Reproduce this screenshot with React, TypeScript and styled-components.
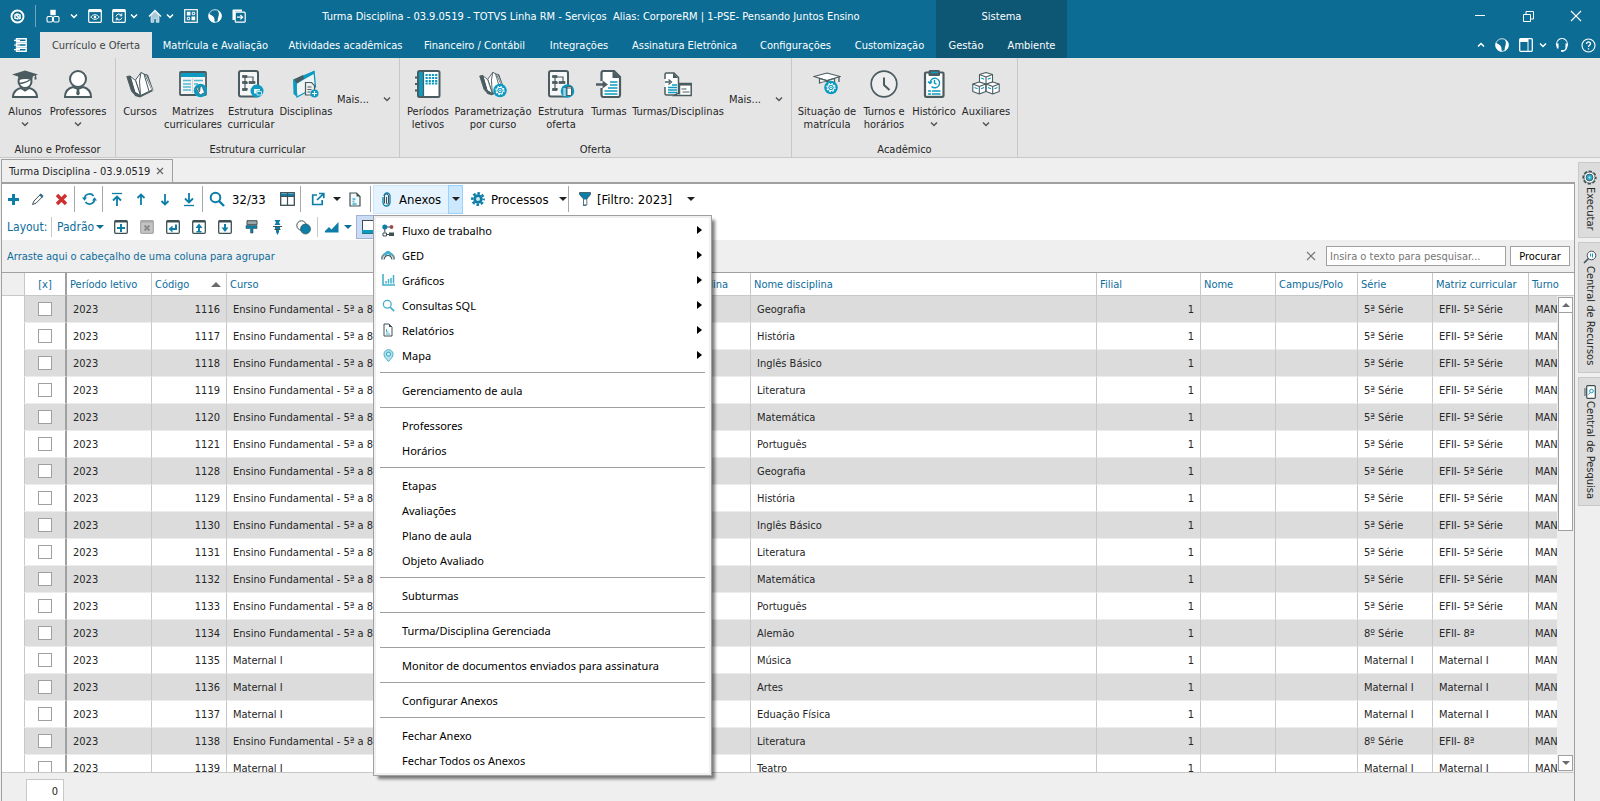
import React from 'react';
import styled, { createGlobalStyle, css } from 'styled-components';

/* ---------- tokens ---------- */
const UI = '"DejaVu Sans Condensed", "Liberation Sans", sans-serif';
const MENU = '"Noto Sans", "Open Sans", sans-serif';
const c = {
  brand: '#0c6c94', brandDark: '#0d5674', ribbon: '#e5e5e5', shell: '#efefef',
  line: '#c8c8c8', frame: '#a0a0a0', link: '#0c6c9c', slate: '#4a5c60', teal: '#0c9ac0', text: '#262626',
};

const Global = createGlobalStyle`
  * { box-sizing: border-box; }
  body { margin: 0; background: ${c.shell}; font: 11px/13px ${UI}; color: ${c.text}; overflow: hidden; }
  button { font: inherit; color: inherit; background: none; border: 0; padding: 0; margin: 0; }
  svg { display: block; flex: none; }
  ul { list-style: none; margin: 0; padding: 0; }
`;

/* ---------- layout parts ---------- */
const Shell = styled.div`display: flex; flex-direction: column; height: 100vh; min-width: 1200px;`;
const Head = styled.header`background: ${c.brand}; color: #fff;`;
const TitleRow = styled.div`display: flex; height: 32px;`;
const TitleMain = styled.div`display: flex; align-items: center; width: 936px; padding-left: 10px;`;
const QuickBar = styled.div`display: flex; align-items: center; gap: 10px;`;
const QuickButton = styled.button`display: flex; align-items: center; gap: 4px; height: 24px;`;
const QatLine = styled.span`width: 1px; height: 22px; background: #6ea6bf;`;
const Caption = styled.h1`flex: 1; margin: 0; font: 11px/13px ${UI}; text-align: center; white-space: pre;`;
const Context = styled.div`display: flex; align-items: center; justify-content: center; width: 131px; background: ${c.brandDark};`;
const Spacer = styled.div`flex: 1;`;
const IconButton = styled.button<{ $w?: number }>`
  display: flex; align-items: center; justify-content: center; width: ${p => p.$w ?? 24}px; height: 24px; flex: none;
`;
const WindowButton = styled(IconButton)`width: 48px; height: 32px;`;

const TabRow = styled.nav`display: flex; height: 26px;`;
const MainMenu = styled.button`display: flex; align-items: center; justify-content: center; width: 40px;`;
const RibbonTab = styled.button<{ $w: number; $on?: boolean; $ctx?: boolean }>`
  width: ${p => p.$w}px; flex: none; white-space: nowrap; text-align: center;
  ${p => p.$on && css`background: ${c.ribbon}; color: #3c4446;`}
  ${p => p.$ctx && css`background: ${c.brandDark};`}
`;
const TabTools = styled.div`display: flex; align-items: center; padding-right: 1px;`;

const Ribbon = styled.section`display: flex; height: 100px; background: ${c.ribbon}; border-bottom: 1px solid ${c.line};`;
const RibbonGroup = styled.div<{ $w: number }>`
  display: flex; flex-direction: column; width: ${p => p.$w}px; flex: none; border-right: 1px solid ${c.line};
`;
const RibbonItems = styled.div`display: flex; flex: 1; padding: 11px 0 0 3px;`;
const RibbonCaption = styled.div`height: 14px; text-align: center;`;
const RibbonItem = styled.button<{ $w: number }>`
  display: flex; flex-direction: column; align-items: center; width: ${p => p.$w}px; flex: none;
`;
const ItemIcon = styled.span`display: block; height: 36px; padding-top: 1px;`;
const ItemLabel = styled.span`white-space: pre; text-align: center; line-height: 13px; margin-bottom: 3px;`;
const MoreButton = styled.button`display: flex; align-items: center; gap: 14px; height: 60px; padding-left: 2px; white-space: nowrap;`;

const Body = styled.main`display: flex; flex: 1; min-height: 0;`;
const Workspace = styled.div`display: flex; flex-direction: column; flex: 1; min-width: 0; padding-left: 1px;`;
const DocTabs = styled.div`display: flex; height: 24px; padding-top: 1px; flex: none;`;
const DocTab = styled.div`
  display: flex; align-items: center; justify-content: space-between; width: 172px; padding: 0 8px 0 7px; white-space: nowrap;
  border: 1px solid ${c.frame}; border-bottom: 0;
`;
const Panel = styled.section`
  display: flex; flex-direction: column; flex: 1; min-height: 0;
  border: solid ${c.frame}; border-width: 2px 1px 0 1px; background: ${c.shell};
`;
const Bar = styled.div<{ $h: number }>`display: flex; align-items: center; height: ${p => p.$h}px; flex: none; background: #fff; font-size: 13px; color: #000;`;
const LayoutBar = styled(Bar)`font-size: 12px; color: ${c.link}; padding-left: 5px;`;
const LayoutLabel = styled.span`width: 43px;`;
const Sep = styled.span<{ $light?: boolean }>`
  width: 1px; height: ${p => (p.$light ? 20 : 26)}px; margin: 0 2px 0 1px; background: ${p => (p.$light ? c.line : '#a8a8a8')};
`;
const Counter = styled.span`width: 46px; padding-left: 3px; white-space: nowrap;`;
const SplitWrap = styled.div`position: relative; display: flex;`;
const SplitMain = styled.button`
  display: flex; align-items: center; gap: 8px; width: 75px; height: 29px; padding-left: 8px; background: #e5f3ff; border: 1px solid #cce8ff; border-right: 0;
`;
const SplitArrow = styled.button`display: flex; align-items: center; justify-content: center; width: 15px; height: 29px; background: #cce8ff; border: 1px solid #99d1ff;`;
const ToolButton = styled.button<{ $w: number }>`
  display: flex; align-items: center; gap: 6px; width: ${p => p.$w}px; height: 28px; padding-left: 8px; white-space: nowrap;
`;
const Caret = styled.span<{ $color?: string }>`
  border: 4px solid transparent; border-top-color: ${p => p.$color ?? '#202020'}; border-bottom: 0;
`;
const EndCaret = styled(Caret)`margin-left: auto;`;
const Padrao = styled.button`display: flex; align-items: center; gap: 2px; width: 54px; padding-left: 3px;`;
const Pressed = styled.button`
  display: flex; align-items: center; width: 30px; height: 24px; padding-left: 5px; background: #cddcf5; border: 1px solid #9fb4d8; margin-left: 4px;
`;

const Menu = styled.ul`
  position: absolute; z-index: 5; top: 30px; left: 0; width: 339px; padding: 2px; background: #fff;
  border: 1px solid ${c.frame}; box-shadow: inset 0 0 0 2px #f0f0f0, 4px 4px 3px -1px rgba(0, 0, 0, .5);
`;
const MenuLine = styled.li`height: 1px; margin: 4px 4px 5px 4px; background: ${c.frame};`;
const MenuButton = styled.button`
  display: flex; align-items: center; width: 100%; height: 25px; padding: 0 7px 0 3px; font: 11px/15px ${MENU}; color: #000; white-space: nowrap;
`;
const MenuIcon = styled.span`display: flex; justify-content: center; width: 18px; margin-right: 5px;`;
const SubArrow = styled.span`margin-left: auto; border: 4px solid transparent; border-left: 5px solid #000; border-right: 0;`;

const GroupBar = styled.div`display: flex; align-items: center; height: 32px; flex: none; padding: 0 4px 0 5px; color: ${c.link};`;
const Search = styled.input`
  width: 180px; height: 20px; margin: 0 4px 0 3px; padding: 0 3px; border: 1px solid ${c.frame}; border-radius: 0; background: #fff;
  font: 11px/13px ${UI}; color: ${c.text};
  &::placeholder { color: #757575; opacity: 1; }
`;
const FindButton = styled.button`width: 60px; height: 20px; border: 1px solid ${c.frame}; background: #fff; color: #000;`;

const GridArea = styled.div`position: relative; flex: 1; min-height: 0; overflow: hidden; background: #fff; border-top: 1px solid ${c.frame};`;
const Table = styled.table`width: 100%; table-layout: fixed; border-collapse: separate; border-spacing: 0;`;
const Th = styled.th<{ $thick?: boolean; $mark?: boolean }>`
  height: 23px; padding: 0 3px; font-weight: 400; text-align: ${p => (p.$thick ? 'center' : 'left')}; color: ${c.link}; white-space: nowrap; overflow: hidden;
  background: ${p => (p.$mark ? c.shell : '#fff')}; border-bottom: 1px solid ${c.line};
  border-right: ${p => (p.$thick ? 2 : 1)}px solid ${p => (p.$thick ? c.frame : c.line)};
  &:last-child { border-right: 0; }
`;
const HeadFlex = styled.span`display: flex; align-items: center; justify-content: space-between; padding-right: 2px;`;
const SortUp = styled.span`border: 5px solid transparent; border-bottom-color: #6b6b6b; border-top: 0;`;
const Td = styled.td<{ $num?: boolean; $thick?: boolean }>`
  height: 27px; padding: 0 6px; text-align: ${p => (p.$num ? 'right' : p.$thick ? 'center' : 'left')}; white-space: nowrap; overflow: hidden;
  border-bottom: 1px solid #ececec; border-right: ${p => (p.$thick ? 2 : 1)}px solid ${p => (p.$thick ? c.frame : c.line)};
  &:last-child { border-right: 0; }
`;
const MarkTd = styled(Td)`background: #fff; border-bottom-color: #fff;`;
const Tr = styled.tr<{ $odd: boolean }>`background: ${p => (p.$odd ? '#dcdcdc' : '#fff')};`;
const Tick = styled.input`
  appearance: none; display: block; width: 14px; height: 14px; margin: 0 auto; border: 1px solid ${c.frame}; border-radius: 0; background: #fff;
`;
const Scroll = styled.div`
  position: absolute; top: 23px; right: 0; bottom: 0; width: 17px; display: flex; flex-direction: column; background: ${c.shell}; padding: 1px;
`;
const ScrollEnd = styled.button`display: flex; align-items: center; justify-content: center; height: 16px; flex: none; border: 1px solid ${c.frame}; background: #fff;`;
const Thumb = styled.div`height: 46%; border: 1px solid ${c.frame}; border-top: 0; background: #fff; margin-bottom: auto;`;
const Foot = styled.footer`height: 29px; flex: none; border-top: 1px solid ${c.line}; padding: 6px 0 0 24px;`;
const Total = styled.output`display: block; width: 38px; height: 22px; padding: 5px 5px 0; text-align: right; background: #fff; border: 1px solid ${c.line}; border-bottom: 0;`;

const Dock = styled.aside`display: flex; flex-direction: column; gap: 4px; width: 25px; flex: none; padding: 4px 0 0 3px;`;
const DockTab = styled.button<{ $h: number }>`
  display: flex; flex-direction: column; align-items: center; gap: 2px; height: ${p => p.$h}px; padding-top: 7px;
  background: #dcdcdc; border: 1px solid ${c.line}; border-right: 0;
`;
const DockText = styled.span`writing-mode: vertical-rl; white-space: nowrap; line-height: 14px;`;

/* ---------- drawings ---------- */
const Svg = ({ s = 16, w, children, ...r }: any) => (
  <svg width={w ?? s} height={s} viewBox={`0 0 ${w ?? s} ${s}`} fill="none" aria-hidden="true" {...r}>{children}</svg>
);
const Chevron = ({ color = '#fff', up }: { color?: string; up?: boolean }) => (
  <Svg w={8} s={6}><path d={up ? 'M1 4.500l3-3 3 3' : 'M1 1.500l3 3 3-3'} stroke={color} strokeWidth="1.500" /></Svg>
);
const Cross = ({ color, s = 9 }: { color: string; s?: number }) => (
  <Svg s={s}><path d={`M1 1L${s - 1} ${s - 1}M${s - 1} 1L1 ${s - 1}`} stroke={color} strokeWidth="1.200" /></Svg>
);
const W = '#fff';
const Globe = () => (
  <Svg s={14}><circle cx="7" cy="7" r="6.300" stroke="#cfe2ea" strokeWidth="1" />
    <path d="M.8 4.500C2.500 6 5 6.500 6 8.500S6 12 7 13.600C3 13.700.6 10.500.5 7zM9.500 1.200c2.500 1 4.100 3 4.100 5.800 0 2.700-1.600 5.200-4.300 6.300.6-2 .2-3 1-5.400s1-4-.8-6.700z" fill={W} /></Svg>
);
const Logo = () => <Svg s={15}><circle cx="7.500" cy="7.500" r="6" stroke={W} strokeWidth="1.900" /><path d="M5 5.200v4L8.500 10M6.300 4.800L10 6v4" stroke={W} strokeWidth="1.500" /><path d="M5.500 5l4.500 5" stroke={W} strokeWidth="1.500" /></Svg>;
const Cubes = () => <Svg s={14}><path d="M4.300.8h5.400v5.400H4.300z" fill={W} /><rect x="1" y="7.500" width="5.500" height="5.500" rx="1.200" stroke={W} strokeWidth="1.100" /><rect x="7.500" y="7.500" width="5.500" height="5.500" rx="1.200" stroke={W} strokeWidth="1.100" /></Svg>;
const WinBox = ({ children }: any) => <Svg s={14}><rect x=".7" y=".7" width="12.600" height="12.600" rx="1" stroke={W} strokeWidth="1.200" /><path d="M1 2h12" stroke={W} strokeWidth="2.200" />{children}</Svg>;
const Eye = () => <WinBox><path d="M2.800 8c2-3 6.400-3 8.400 0-2 3-6.400 3-8.400 0z" stroke={W} /><circle cx="7" cy="8" r="1.300" fill={W} /></WinBox>;
const Cycle = () => <WinBox><path d="M4 7.500a3 3 0 0 1 5.500-1M10 8.500a3 3 0 0 1-5.500 1M9.800 4.500v2.300H7.700M4.300 11.500V9.200h2" stroke={W} /></WinBox>;
const Home = () => <Svg s={14}><path d="M1 7.500L7 1.500l6 6" stroke={W} strokeWidth="1.300" /><path d="M3 7v6.300h2.800V9.500h2.400v3.800H11V7L7 3z" fill="#a8cad8" stroke={W} strokeWidth=".6" /></Svg>;
const Cells = () => <Svg s={14}><rect x=".7" y=".7" width="12.600" height="12.600" stroke={W} strokeWidth="1.200" /><path d="M2.800 2.800h3.700v3.700H2.800zM7.500 7.500h3.700v3.700H7.500z" fill={W} /><path d="M8.300 3.300h2.400v2.400H8.300zM3.300 8.300h2.400v2.400H3.300z" stroke={W} /></Svg>;
const Exit = () => <Svg s={14}><path d="M.5 1.500q0-1 1-1H10v2H3V11H.5z" fill={W} /><rect x="3.200" y="3.200" width="10" height="10" rx="1" stroke={W} strokeWidth="1.200" /><path d="M5 8.200h5.500M8.400 6l2.200 2.200-2.200 2.200" stroke={W} strokeWidth="1.200" /></Svg>;
const Books = () => <Svg w={13} s={14}><path d="M2.500.8h9.700v3H2.500zM2.500 5.500h9.700v3H2.500zM2.500 10.200h9.700v3H2.500z" stroke={W} strokeWidth="1.400" /><path d="M0 2.300h6M0 7h6M0 11.700h6" stroke={W} strokeWidth="1.200" /></Svg>;
const PanelIcon = () => <Svg s={14}><rect x=".7" y=".7" width="12.600" height="12.600" rx="1" stroke={W} strokeWidth="1.300" /><path d="M1 1h8v3H1z" fill={W} /><path d="M9 1v12" stroke={W} /></Svg>;
const Headset = () => <Svg s={14}><path d="M3 9a5.200 5.200 0 1 1 8 0M7 13c3 0 4-1.500 4.500-3" stroke={W} strokeWidth="1.100" /><path d="M.8 5.500h2.700v5H2zM10.500 5.500h2.700l-1.200 5h-1.500zM6 12h2.500v1.800H6z" fill={W} /></Svg>;
const Help = () => <Svg s={15}><circle cx="7.500" cy="7.500" r="6.500" stroke={W} strokeWidth="1.100" /><path d="M5.500 6c0-3 4-2.700 4-.3 0 1.500-2 1.500-2 3.200M7.500 10.300v1.200" stroke={W} strokeWidth="1.300" /></Svg>;

/* ribbon drawings, all on a 28px field */
const S = c.slate, B = c.teal;
const R = ({ children }: any) => <Svg s={28} stroke={S} strokeWidth="1.600">{children}</Svg>;
const Cog = ({ x, y }: { x: number; y: number }) => (
  <g stroke="none"><circle cx={x} cy={y} r="6.800" fill={B} /><circle cx={x} cy={y} r="4" stroke="#fff" strokeWidth="1.300" strokeDasharray="1.600 1.540" fill="none" /><circle cx={x} cy={y} r="3.200" stroke="#fff" strokeWidth="1" fill="none" /><circle cx={x} cy={y} r="1.200" stroke="#fff" strokeWidth=".9" fill="none" /></g>
);
const BookShape = () => (
  <g fill="#fff" strokeWidth="1" strokeLinejoin="round">
    <path d="M19 4.500l2.500.5L27 20.500 14 27 9 25.500z" fill={S} />
    <path d="M9.500 10L15 2.500l4 2L26 20l-11.500 5.500z" />
    <path d="M15 2.500L13.500 11 14.500 25M18 4.200l5 17" fill="none" />
    <path d="M4 6l5.500 4.500 5 15L8.500 22z" />
    <path d="M.8 6.500L4 6l5 16.500 5 3.500-5.500-1.500L5.500 21z" fill={S} />
    <path d="M20 5l6.500 15.500" stroke="#fff" fill="none" strokeWidth=".7" />
  </g>
);
const TreeDoc = ({ children }: any) => <R><rect x="2" y="1" width="19" height="25.500" rx="2" fill="#f7f7f7" strokeWidth="2" /><path d="M8 6v13h3M8 13h3M8 7h8v5" strokeWidth="1.200" /><path d="M5.500 5.500H10v2H5.500zM12 11.500h6v2h-6zM5.500 11.500H10v2H5.500zM5.500 18.500H10v2H5.500z" fill={S} strokeWidth=".8" />{children}</R>;
const art: Record<string, React.ReactNode> = {
  aluno: <R><path d="M2 27c0-6 5-8.500 8-9l4 2.500 4-2.500c3 .5 8 3 8 9z" fill="#fff" strokeWidth="2" /><circle cx="14" cy="11.500" r="6.500" fill="#fff" strokeWidth="2" /><path d="M1 4.500L14 .5l13 4-5 1.800L21 10c-4-1.500-9-1.500-13 0L7 6.500z" fill={S} stroke="none" /><path d="M8 13.500c5-.5 8-1 11-4M24.500 5v3" strokeWidth="1.300" /><path d="M23.500 7.500h2v2h-2z" fill={S} stroke="none" /></R>,
  professor: <R><path d="M1 27c0-6 4-9 8-10l5 2 5-2c4 1 8 4 8 10z" fill="#fff" strokeWidth="2" /><circle cx="14" cy="9" r="8" fill="#fff" strokeWidth="2" /><path d="M13 18.500h2l.8 5.500L14 25.500 12.200 24z" fill={S} stroke="none" /></R>,
  cursos: <R><BookShape /></R>,
  matrizes: <R><rect x="1" y="2" width="26" height="23" rx="1" fill="#f4f4f4" strokeWidth="1.800" /><path d="M2 3h24v4H2z" fill={B} stroke="none" /><path d="M4 10.500h8M4 14h8M4 17h8M4 20h8M15 10.500h9M15 14h4" stroke="#55b7d2" strokeWidth="1.300" /><path d="M13.500 8v15" stroke="#ccc" strokeWidth=".8" /><circle cx="21.500" cy="20.500" r="6.800" fill={B} stroke="none" /><path d="M17 17.500l2 .5 1.500 4 1-6 1.500.5 2.500 6L21 25z" fill="#fff" strokeWidth=".7" /></R>,
  estrutura: <TreeDoc><circle cx="20" cy="21" r="6.500" fill={B} stroke="none" /><path d="M16.500 18h7v6h-7z" fill="#e9f6fa" stroke="none" /><path d="M16.500 18.500h7v2.500H20v3h-3.500z" stroke={B} fill="none" strokeWidth="1" /><path d="M20 21.500h4.500v3.500H20z" fill={B} stroke="#e9f6fa" strokeWidth=".8" /></TreeDoc>,
  disciplinas: <R><path d="M3 11L22 1.500 23.500 17 5 27z" fill="#f0f4f5" stroke={B} strokeWidth="1.300" /><path d="M1 9.500L22.500.8V3.500L5 13.500 4.500 26.500 1.500 24z" fill={B} stroke="none" /><path d="M2 9.500l9-4.500 1 3.500-7 5z" fill={S} stroke="none" /><path d="M13.500 12.500h6l3 3V25h-9z" fill="#eee" strokeWidth="1.200" /><path d="M15.500 17h4M15.500 19.500h4M15.500 22h3" strokeWidth="1" /><circle cx="22.500" cy="23.500" r="4" fill={B} stroke="none" /><path d="M22.500 21v5M20 23.500h5" stroke="#fff" strokeWidth="1.100" /></R>,
  periodos: <R><rect x="4" y="1" width="21.500" height="26" rx="1.500" fill="#fff" strokeWidth="2" /><path d="M5 2h4v24H5z" fill={B} stroke="none" /><path d="M9.500 1v26" strokeWidth="1.200" /><path d="M1 7.500h4M1 14h4M1 20.500h4" strokeWidth="2" /><path d="M11.500 5h12M11.500 8h12M11.500 11h12M11.500 13.500h12" stroke={B} strokeWidth="1.800" strokeDasharray="2.200 1" /></R>,
  parametrizacao: <R><g transform="scale(.92)"><BookShape /></g><Cog x={21} y={20.5} /></R>,
  oferta: <TreeDoc><circle cx="20.500" cy="21" r="6.800" fill={B} stroke="none" /><path d="M16.500 18h8M20 16.500h4.500v9H20z" fill="#fff" stroke={S} strokeWidth="1" /><path d="M17.500 18v8" stroke="#9fd7e6" strokeWidth="2.500" /></TreeDoc>,
  turmas: <R><path d="M6.500 11V3q0-2 2-2H19l6 6v18q0 2-2 2H8.500q-2 0-2-2v-7" fill="#fff" strokeWidth="2.200" /><path d="M17.500 1v7H25z" fill={S} stroke="none" /><path d="M1 14.500h8" strokeWidth="2.400" /><path d="M7.500 10.500l5.500 4-5.500 4z" fill={S} stroke="none" /><path d="M15 12h7.500M15 15h7.500M13 18h9.500M9.500 21h13M9.500 24h13" stroke={B} strokeWidth="1.500" /></R>,
  turmasDisc: <R><path d="M1 9V4.500Q1 3 2.500 3H10l4.500 4.500v16q0 1.500-1.500 1.500H2.500Q1 25 1 23.500V17" fill="#fff" strokeWidth="1.500" /><path d="M9 3v5h5z" fill={S} stroke="none" /><path d="M1 12h5M4.500 9.500L7.500 12l-3 2.500" strokeWidth="1.300" /><path d="M8 15h5M4 17.500h9M4 20h9M4 22.500h9" stroke={B} strokeWidth="1.300" /><path d="M15.500 13.500h11.700v12H10.500l3-2h2z" fill="#fff" strokeWidth="1.500" /><path d="M15 14.300h12.500" strokeWidth="2.500" /><path d="M17.500 19h5M18.500 22h7" strokeWidth="1.200" /></R>,
  situacao: <R><path d="M1 6.500L14 3l13 3.500-13 4z" fill="#fff" strokeWidth="1.200" /><path d="M6.500 8.500V13c5-2 10-2 15 0V8.500l-7.500 2.300z" fill="#fff" strokeWidth="1.200" /><path d="M26 7v5" strokeWidth="1.300" /><Cog x={18} y={17.5} /></R>,
  turnos: <R><circle cx="14" cy="14" r="12.800" fill="#eee" strokeWidth="1.700" /><path d="M14 7.500V15l5.500 5" strokeWidth="2" /></R>,
  historico: <R><rect x="5" y="2.500" width="18.500" height="24.300" rx="1" fill="#fff" strokeWidth="2.200" /><path d="M8.500 1.500Q8.500 0 10 0h8.500Q20 0 20 1.500V5q0 1-1 1H9.500q-1 0-1-1z" fill={S} stroke="none" /><path d="M11 2.500h7" stroke={B} strokeWidth="1.500" /><path d="M10 13a4.800 4.800 0 1 1 1.500 3.500M8 11.500l2 2 2-2M14.500 10v3l2 1.200" stroke={B} strokeWidth="1.400" /><path d="M8 21h12.500M8 24h12.500" stroke={B} strokeWidth="1.300" strokeDasharray="3 1 20" /></R>,
  auxiliares: <R>{[[14, 2.5], [7.3, 12], [20.7, 12]].map(([x, y]) => <g key={x} transform={`translate(${x} ${y})`} fill="#fff" strokeWidth="1.100" strokeLinejoin="round"><path d="M0 0l6.500 2v7.500L0 12l-6.500-2.500V2z" /><path d="M-6.500 2L0 4.500 6.500 2M0 4.500V12" fill="none" /><path d="M-4.800 5.500l3 1.200M4.800 5.500l-3 1.200" stroke={B} /></g>)}</R>,
};

/* toolbar drawings */
const D = '#0c7ea8', K = '#3e5055';
const Arrow = ({ down, bar }: { down?: boolean; bar?: boolean }) => (
  <Svg w={12} s={15}><g transform={down ? 'rotate(180 6 7.500)' : undefined}><path d={bar ? 'M6 14V5M2 8.500L6 4.500l4 4' : 'M6 13V3M2.500 6L6 2.500 9.500 6'} stroke={D} strokeWidth="1.800" />{bar && <path d="M1 1.500h10" stroke={D} strokeWidth="1.300" />}</g></Svg>
);
const Lens = ({ s = 16, color = D, sw = 2 }: any) => <svg width={s} height={s} viewBox="0 0 16 16" fill="none" aria-hidden="true"><circle cx="6.500" cy="6.500" r="4.800" stroke={color} strokeWidth={sw} /><path d="M10 10l5 5" stroke={color} strokeWidth={sw + 0.4} /></svg>;
const Gear = () => (
  <Svg s={14}><circle cx="7" cy="7" r="4.700" fill={D} /><circle cx="7" cy="7" r="5.700" stroke={D} strokeWidth="2.400" strokeDasharray="2.600 1.877" strokeDashoffset="1.300" /><circle cx="7" cy="7" r="2" fill="#cfe9f2" /></Svg>
);
const GearOutline = () => (
  <Svg s={15}><circle cx="7.500" cy="7.500" r="5.800" fill="#fff" stroke={K} strokeWidth="2.600" strokeDasharray="3 1.555" strokeDashoffset="1.500" /><circle cx="7.500" cy="7.500" r="5.500" fill="#fff" stroke={K} strokeWidth=".8" /><circle cx="7.500" cy="7.500" r="3.400" fill="#23b0d4" stroke={K} strokeWidth=".9" /><circle cx="7.500" cy="7.500" r=".9" fill="#d6f2f8" /></Svg>
);
const Page = () => <Svg w={12} s={15}><path d="M1 1h6.500L11 4.500V14H1z" fill="#f5f8f8" stroke={K} strokeWidth="1.200" /><path d="M7.500 1v3.500H11z" fill={K} /><path d="M3.500 7h3M3.500 9.500h2M3.500 12h4" stroke="#6bc0d6" strokeWidth="2" /></Svg>;
const Plus = () => <Svg s={13}><path d="M6.500 1v11M1 6.500h11" stroke={D} strokeWidth="3" /></Svg>;
const Pencil = () => <Svg s={13}><path d="M1.500 11.500L3 8l6-6.200L11.200 4 5 10.200z" stroke={K} fill="#fff" /><path d="M8.500 2L10 .8 12.200 3 11 4.500z" fill={D} stroke={K} strokeWidth=".6" /></Svg>;
const Delete = () => <Svg s={13}><path d="M2 2l9 9M11 2l-9 9" stroke="#cf2f2f" strokeWidth="3.400" /></Svg>;
const Refresh = () => <Svg w={15} s={14}><path d="M2.500 7a5 5 0 0 1 9-3M12.500 7a5 5 0 0 1-9 3" stroke={D} strokeWidth="1.700" /><path d="M0 5.500h5L2.500 8.800zM15 8.500h-5l2.500-3.300z" fill={D} /></Svg>;
const Columns = () => <Svg w={15} s={14}><rect x=".7" y=".7" width="13.600" height="12.600" fill="#fff" stroke={K} strokeWidth="1.300" /><path d="M1 1.500h13v2.500H1z" fill={D} /><path d="M7.500 1v12M1 4.500h13" stroke={K} strokeWidth="1.200" /></Svg>;
const Share = () => <Svg s={14}><path d="M6 3H1.700v9.500h9.500V8M8 1.500h4.800v4.800M12.500 1.800L6 8" stroke={D} strokeWidth="1.700" /></Svg>;
const Clip = () => <Svg w={9} s={15}><path d="M2.500 11.500V4a2 2 0 0 1 4 0v7a1 1 0 0 1-2 0V5" stroke={K} strokeWidth="1" /><path d="M1 5v5.500a3.500 3.500 0 0 0 7 0V4a3 3 0 0 0-6 0" stroke={D} strokeWidth="1.300" /></Svg>;
const Funnel = () => <Svg w={12} s={14}><path d="M.5.500h11v2L7.800 7v6l-3.200 1V7L.5 2.500z" fill={D} stroke={K} strokeWidth=".8" /><path d="M5 7.500h2.400v5H5z" fill="#fff" /></Svg>;
const FrameIcon = ({ children, muted }: any) => <Svg s={14}><rect x=".7" y=".7" width="12.600" height="12.600" rx="1" fill={muted ? '#c4c4c4' : '#fff'} stroke={muted ? '#a8a8a8' : K} strokeWidth="1.300" /><path d="M1 1.500h12" stroke={muted ? '#a8a8a8' : K} strokeWidth="2" /><g stroke={muted ? '#8a8a8a' : D} strokeWidth="2">{children}</g></Svg>;
const layoutIcons: [string, React.ReactNode][] = [
  ['Adicionar', <FrameIcon><path d="M7 4v8M3 8h8" /></FrameIcon>],
  ['Excluir', <FrameIcon muted><path d="M4.500 5.500l5 5M9.500 5.500l-5 5" /></FrameIcon>],
  ['Restaurar', <FrameIcon><path d="M10 4.500V9H5" /><path d="M2.500 9L6.500 5.500v7z" fill={D} stroke="none" /></FrameIcon>],
  ['Exportar', <FrameIcon><path d="M7 12V7" /><path d="M7 3.500L3.500 8h7zM4.500 11h5v1.500h-5z" fill={D} stroke="none" /></FrameIcon>],
  ['Importar', <FrameIcon><path d="M7 4v5" /><path d="M7 12L3.500 7.500h7z" fill={D} stroke="none" /></FrameIcon>],
  ['Pintar', <Svg w={13} s={14}><path d="M2 .7h10v4H2z" fill="#9aa5a8" stroke={K} /><path d="M1 5.500h11v3H8V13H5.500V8.500H1z" fill={D} stroke={K} strokeWidth=".6" /></Svg>],
  ['Fixar', <Svg w={11} s={15}><path d="M2.500 0h6L7 2.500 8.500 5h-6L4 2.500zM3 6h5v3l-1 1v2L5.500 15 4 12v-2L3 9z" fill={D} /><path d="M1 6.500h9M2.500 9.500h6" stroke={K} strokeWidth="1.200" /></Svg>],
  ['Condições', <Svg s={15}><circle cx="5.500" cy="5.500" r="4.700" fill="#fff" stroke={K} /><circle cx="9.500" cy="9" r="5" fill={D} stroke={K} strokeWidth=".7" /></Svg>],
];
const AreaChart = () => <Svg w={14} s={12}><path d="M0 11.500V10l4-4 2.500 2.500L13.500 1v10.500z" fill={D} /></Svg>;
const Layers = () => <Svg w={18} s={14}><rect x=".5" y=".5" width="17" height="13" fill="#fff" stroke={K} /><path d="M0 10h18v3.500H0z" fill={B} /></Svg>;

/* menu drawings */
const M = '#45b0cc';
const menuArt: Record<string, React.ReactNode> = {
  fluxo: <Svg w={12} s={13}><circle cx="2.800" cy="3" r="2.500" fill={D} /><circle cx="9.500" cy="3" r="1.900" fill="#9e4a4a" /><path d="M2.800 5v3.500" stroke={K} /><path d="M1 9h3.500v3H1z" stroke={K} /><path d="M7 8.500h5V12H7z" fill={K} /><path d="M5 3h3M5 10.500h2" stroke={K} /></Svg>,
  ged: <Svg w={14} s={10}><path d="M.5 9.500C1 6 2.500 4.500 4 3.500M13.500 9.500C13 6 11.500 4.500 10 3.500" stroke="#78939b" strokeWidth="1.800" /><path d="M4 2.500Q7-.8 10 2.500L11.500 5 9.500 6 7 4 4.500 6 2.500 5z" fill={M} /><path d="M3 9.500c.5-2.500 2-4 4-4s3.500 1.500 4 4" stroke={K} strokeWidth="1.100" /></Svg>,
  graficos: <Svg w={13} s={12}><path d="M1 0v11h12" stroke={M} strokeWidth="1.600" /><path d="M4 9.500V7M6.500 9.500V5M9 9.500V4M11.500 9.500V1" stroke={M} strokeWidth="1.500" /></Svg>,
  consultas: <Lens s={13} color={M} sw={1.6} />,
  relatorios: <Svg w={10} s={14}><path d="M1 1h5l3 3v9H1z" fill="#fff" stroke={K} /><path d="M6 1v3h3z" fill={K} /><path d="M3.500 6v3h2M3 11h4" stroke={M} /></Svg>,
  mapa: <Svg w={11} s={13}><path d="M5.500 12.500C3 9.500 1 8 1 5.200a4.500 4.500 0 0 1 9 0c0 2.800-2 4.300-4.500 7.300z" fill="#b9e2ec" stroke={M} /><circle cx="5.500" cy="5.200" r="2" stroke={M} strokeWidth="1.200" fill="#e8f6fa" /></Svg>,
};

/* ---------- data ---------- */
const tabs: [string, number][] = [['Currículo e Oferta', 112], ['Matrícula e Avaliação', 127], ['Atividades acadêmicas', 133], ['Financeiro / Contábil', 125], ['Integrações', 84], ['Assinatura Eletrônica', 127], ['Configurações', 95], ['Customização', 93]];
type Item = { icon: string; label: string; w: number; drop?: boolean };
const groups: { name: string; w: number; more?: boolean; items: Item[] }[] = [
  { name: 'Aluno e Professor', w: 116, items: [{ icon: 'aluno', label: 'Alunos', w: 44, drop: true }, { icon: 'professor', label: 'Professores', w: 62, drop: true }] },
  { name: 'Estrutura curricular', w: 284, more: true, items: [{ icon: 'cursos', label: 'Cursos', w: 42 }, { icon: 'matrizes', label: 'Matrizes\ncurriculares', w: 64 }, { icon: 'estrutura', label: 'Estrutura\ncurricular', w: 52 }, { icon: 'disciplinas', label: 'Disciplinas', w: 58 }] },
  { name: 'Oferta', w: 392, more: true, items: [{ icon: 'periodos', label: 'Períodos\nletivos', w: 50 }, { icon: 'parametrizacao', label: 'Parametrização\npor curso', w: 80 }, { icon: 'oferta', label: 'Estrutura\noferta', w: 56 }, { icon: 'turmas', label: 'Turmas', w: 40 }, { icon: 'turmasDisc', label: 'Turmas/Disciplinas', w: 98 }] },
  { name: 'Acadêmico', w: 226, items: [{ icon: 'situacao', label: 'Situação de\nmatrícula', w: 64 }, { icon: 'turnos', label: 'Turnos e\nhorários', w: 50 }, { icon: 'historico', label: 'Histórico', w: 50, drop: true }, { icon: 'auxiliares', label: 'Auxiliares', w: 54, drop: true }] },
];
const menu: (null | [string, string?])[] = [
  ['Fluxo de trabalho', 'fluxo'], ['GED', 'ged'], ['Gráficos', 'graficos'], ['Consultas SQL', 'consultas'], ['Relatórios', 'relatorios'], ['Mapa', 'mapa'], null,
  ['Gerenciamento de aula'], null, ['Professores'], ['Horários'], null, ['Etapas'], ['Avaliações'], ['Plano de aula'], ['Objeto Avaliado'], null,
  ['Subturmas'], null, ['Turma/Disciplina Gerenciada'], null, ['Monitor de documentos enviados para assinatura'], null, ['Configurar Anexos'], null, ['Fechar Anexo'], ['Fechar Todos os Anexos'],
];
const EF = 'Ensino Fundamental - 5ª a 8ª', MI = 'Maternal I';
const rows: [number, string, string, string, string][] = [
  ...([[1116, 'Geografia'], [1117, 'História'], [1118, 'Inglês Básico'], [1119, 'Literatura'], [1120, 'Matemática'], [1121, 'Português'], [1128, 'Geografia'], [1129, 'História'], [1130, 'Inglês Básico'], [1131, 'Literatura'], [1132, 'Matemática'], [1133, 'Português']] as [number, string][])
    .map(([n, d]): [number, string, string, string, string] => [n, EF, d, '5ª Série', 'EFII- 5ª Série']),
  [1134, EF, 'Alemão', '8º Série', 'EFII- 8ª'],
  [1135, MI, 'Música', MI, MI], [1136, MI, 'Artes', MI, MI], [1137, MI, 'Eduação Física', MI, MI],
  [1138, EF, 'Literatura', '8º Série', 'EFII- 8ª'], [1139, MI, 'Teatro', MI, MI],
];
const columnWidths = [23, 42, 85, 75, 414, 110, undefined, 104, 75, 82, 75, 96, 45];

/* ---------- page ---------- */
export default function App() {
  return (
    <Shell>
      <Global />
      <Head>
        <TitleRow>
          <TitleMain>
            <QuickBar>
              <QuickButton aria-label="Menu do aplicativo"><Logo /></QuickButton><QatLine />
              <QuickButton aria-label="Módulos"><Cubes /></QuickButton><QuickButton aria-label="Mais módulos"><Chevron /></QuickButton>
              <QuickButton aria-label="Visualizar"><Eye /></QuickButton><QuickButton aria-label="Atualizar"><Cycle /><Chevron /></QuickButton>
              <QuickButton aria-label="Início"><Home /><Chevron /></QuickButton>
              <QuickButton aria-label="Janelas"><Cells /></QuickButton><QuickButton aria-label="Web"><Globe /></QuickButton><QuickButton aria-label="Sair"><Exit /></QuickButton>
            </QuickBar>
            <Caption>{'Turma Disciplina - 03.9.0519 - TOTVS Linha RM - Serviços  Alias: CorporeRM | 1-PSE- Pensando Juntos Ensino'}</Caption>
          </TitleMain>
          <Context>Sistema</Context>
          <Spacer />
          <WindowButton aria-label="Minimizar"><Svg w={10} s={2}><path d="M0 .5h10" stroke="#fff" /></Svg></WindowButton>
          <WindowButton aria-label="Restaurar"><Svg s={11}><path d="M.5 3.500h7v7h-7zM3 3V.5h7.500v7.500H8" stroke="#fff" /></Svg></WindowButton>
          <WindowButton aria-label="Fechar"><Cross color="#fff" s={12} /></WindowButton>
        </TitleRow>
        <TabRow>
          <MainMenu aria-label="Menu principal"><Books /></MainMenu>
          {tabs.map(([t, w], i) => <RibbonTab key={t} $w={w} $on={i === 0}>{t}</RibbonTab>)}
          <RibbonTab $w={60} $ctx>Gestão</RibbonTab><RibbonTab $w={71} $ctx>Ambiente</RibbonTab>
          <Spacer />
          <TabTools>
            <IconButton $w={20} aria-label="Recolher"><Chevron up /></IconButton><IconButton $w={22} aria-label="Web"><Globe /></IconButton>
            <IconButton $w={26} aria-label="Painéis"><PanelIcon /></IconButton><IconButton $w={8} aria-label="Opções de painéis"><Chevron /></IconButton>
            <IconButton $w={30} aria-label="Suporte"><Headset /></IconButton><IconButton $w={22} aria-label="Ajuda"><Help /></IconButton>
          </TabTools>
        </TabRow>
      </Head>

      <Ribbon>
        {groups.map(g => (
          <RibbonGroup key={g.name} $w={g.w}>
            <RibbonItems>
              {g.items.map(i => (
                <RibbonItem key={i.icon} $w={i.w}>
                  <ItemIcon>{art[i.icon]}</ItemIcon><ItemLabel>{i.label}</ItemLabel>{i.drop && <Chevron color="#555" />}
                </RibbonItem>
              ))}
              {g.more && <MoreButton>Mais... <Chevron color="#555" /></MoreButton>}
            </RibbonItems>
            <RibbonCaption>{g.name}</RibbonCaption>
          </RibbonGroup>
        ))}
      </Ribbon>

      <Body>
        <Workspace>
          <DocTabs><DocTab>Turma Disciplina - 03.9.0519<button aria-label="Fechar aba"><Cross color="#666" s={8} /></button></DocTab></DocTabs>
          <Panel>
            <Bar $h={30}>
              <IconButton $w={23} aria-label="Novo"><Plus /></IconButton><IconButton aria-label="Editar"><Pencil /></IconButton><IconButton aria-label="Excluir"><Delete /></IconButton><Sep />
              <IconButton aria-label="Atualizar"><Refresh /></IconButton><Sep />
              <IconButton aria-label="Primeiro"><Arrow bar /></IconButton><IconButton aria-label="Anterior"><Arrow /></IconButton><IconButton aria-label="Próximo"><Arrow down /></IconButton><IconButton aria-label="Último"><Arrow down bar /></IconButton><Sep />
              <IconButton aria-label="Localizar"><Lens /></IconButton><Counter>32/33</Counter><IconButton aria-label="Colunas"><Columns /></IconButton><Sep />
              <IconButton $w={30} aria-label="Exportar"><Share /></IconButton><IconButton $w={8} aria-label="Opções de exportação"><Caret /></IconButton><IconButton $w={28} aria-label="Relatório"><Page /></IconButton><Sep />
              <SplitWrap>
                <SplitMain><Clip />Anexos</SplitMain>
                <SplitArrow aria-label="Abrir anexos" aria-expanded="true"><Caret /></SplitArrow>
                <Menu role="menu">
                  {menu.map((m, i) => m === null
                    ? <MenuLine key={i} role="separator" />
                    : <li key={i} role="none"><MenuButton role="menuitem"><MenuIcon>{m[1] && menuArt[m[1]]}</MenuIcon>{m[0]}{m[1] && <SubArrow />}</MenuButton></li>)}
                </Menu>
              </SplitWrap>
              <ToolButton $w={104}><Gear />Processos<EndCaret /></ToolButton>
              <Sep />
              <ToolButton $w={124}><Funnel />[Filtro: 2023]<EndCaret /></ToolButton>
            </Bar>
            <LayoutBar $h={26}>
              <LayoutLabel>Layout:</LayoutLabel><Sep $light />
              <Padrao>Padrão<Caret $color={c.link} /></Padrao>
              {layoutIcons.map(([name, icon]) => <IconButton key={name} $w={26} aria-label={name}>{icon}</IconButton>)}
              <Sep $light /><IconButton aria-label="Gráfico"><AreaChart /></IconButton><IconButton $w={8} aria-label="Opções de gráfico"><Caret $color={c.link} /></IconButton>
              <Pressed aria-label="Painel de detalhes"><Layers /></Pressed>
            </LayoutBar>
            <GroupBar>
              Arraste aqui o cabeçalho de uma coluna para agrupar
              <Spacer />
              <IconButton aria-label="Limpar pesquisa"><Cross color="#777" s={10} /></IconButton>
              <Search aria-label="Pesquisar" placeholder="Insira o texto para pesquisar..." />
              <FindButton>Procurar</FindButton>
            </GroupBar>
            <GridArea>
              <Table>
                <colgroup>{columnWidths.map((w, i) => <col key={i} width={w} />)}</colgroup>
                <thead>
                  <tr>
                    <Th $mark aria-label="Indicador" /><Th $thick>[x]</Th><Th>Período letivo</Th><Th><HeadFlex>Código<SortUp /></HeadFlex></Th><Th>Curso</Th>
                    <Th>Código disciplina</Th><Th>Nome disciplina</Th><Th>Filial</Th><Th>Nome</Th><Th>Campus/Polo</Th><Th>Série</Th><Th>Matriz curricular</Th><Th>Turno</Th>
                  </tr>
                </thead>
                <tbody>
                  {rows.map(([code, course, subject, grade, matrix], i) => (
                    <Tr key={code} $odd={i % 2 === 0}>
                      <MarkTd /><Td $thick><Tick type="checkbox" aria-label={`Selecionar ${code}`} /></Td><Td>2023</Td><Td $num>{code}</Td><Td>{course}</Td>
                      <Td /><Td>{subject}</Td><Td $num>1</Td><Td /><Td /><Td>{grade}</Td><Td>{matrix}</Td><Td>MAN</Td>
                    </Tr>
                  ))}
                </tbody>
              </Table>
              <Scroll>
                <ScrollEnd aria-label="Rolar para cima"><Svg w={8} s={4}><path d="M0 4h8L4 0z" fill="#6b6b6b" /></Svg></ScrollEnd>
                <Thumb />
                <ScrollEnd aria-label="Rolar para baixo"><Svg w={8} s={4}><path d="M0 0h8L4 4z" fill="#6b6b6b" /></Svg></ScrollEnd>
              </Scroll>
            </GridArea>
            <Foot><Total>0</Total></Foot>
          </Panel>
        </Workspace>
        <Dock>
          <DockTab $h={76}><GearOutline /><DockText>Executar</DockText></DockTab>
          <DockTab $h={131}><Svg s={14}><circle cx="8.500" cy="5.500" r="4.300" fill="#fff" stroke={K} /><path d="M5.500 8.500L1 13" stroke={K} strokeWidth="1.600" /><path d="M7.500 3.500v3M9.500 3.500v4" stroke={B} /></Svg><DockText>Central de Recursos</DockText></DockTab>
          <DockTab $h={129}><Svg w={12} s={14}><path d="M0 3h2v8H0z" fill="#8c989b" /><rect x="2.700" y=".7" width="8.600" height="12.600" rx="1" fill="#fff" stroke={K} strokeWidth="1.200" /><circle cx="7.500" cy="6" r="1.800" stroke={B} /><path d="M6 7.500L4.500 9.500" stroke={B} /></Svg><DockText>Central de Pesquisa</DockText></DockTab>
        </Dock>
      </Body>
    </Shell>
  );
}
